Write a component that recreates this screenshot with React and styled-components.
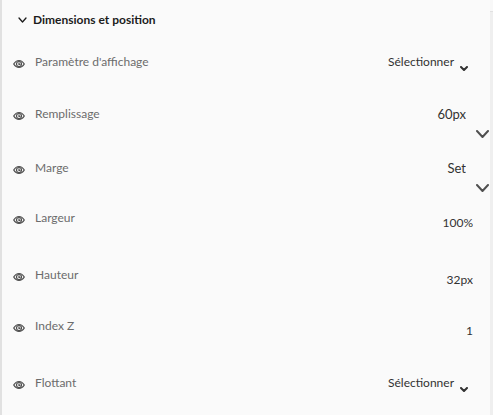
import React, { useState } from "react";
import styled, { createGlobalStyle } from "styled-components";

const GlobalStyle = createGlobalStyle`
  * { box-sizing: border-box; }
  body {
    margin: 0;
    background: #fafafa;
    font-family: Lato, "Noto Sans", sans-serif;
    font-size: 12px;
    line-height: 20px;
    color: #323232;
  }
  button, input, select { font: inherit; color: inherit; }
`;

const Page = styled.div`
  display: flex;
  min-height: 100vh;
  border-left: 2px solid #e1e1e1;
`;

const Panel = styled.section`
  flex: 1;
  min-width: 0;
  padding-top: 10px;
`;

const Gutter = styled.div`
  width: 3px;
  background: #efefef;
`;

const GutterCap = styled.div`
  height: 12px;
  background: #f8f8f8;
  border-bottom: 1px solid #e1e1e1;
`;

const Heading = styled.h2`
  margin: 0 0 22px;
  font-size: 12px;
  line-height: 20px;
`;

const HeadingButton = styled.button`
  display: flex;
  align-items: center;
  gap: 6px;
  padding: 0 0 0 16px;
  border: 0;
  background: none;
  color: #1c1c1c;
  font-weight: 700;
`;

const Row = styled.div`
  display: flex;
  align-items: flex-start;
  height: ${(p) => p.$height}px;
`;

const EyeButton = styled.button`
  display: flex;
  width: 33px;
  padding: 6px 0 0 11px;
  border: 0;
  background: none;
  color: #505050;
`;

const Label = styled.label`
  flex: 1;
  white-space: nowrap;
  color: #6c6c6c;
`;

const Field = styled.div`
  display: flex;
  flex-direction: column;
  align-items: flex-end;
`;

const TextInput = styled.input`
  width: 100px;
  height: 20px;
  margin-top: ${(p) => (p.$compound ? 0 : 5)}px;
  padding: 0 ${(p) => (p.$compound ? 24 : 17)}px 0 0;
  border: 0;
  outline: 0;
  background: none;
  font-size: ${(p) => (p.$compound ? 13 : 12)}px;
  text-align: right;
`;

const SelectBox = styled.div`
  display: flex;
  gap: 5px;
  padding-right: 22px;
`;

const Select = styled.select`
  appearance: none;
  height: 20px;
  padding: 0;
  border: 0;
  outline: 0;
  background: none;
`;

const SelectArrow = styled.span`
  display: flex;
  padding-top: 14px;
  pointer-events: none;
`;

const ExpandButton = styled.button`
  display: flex;
  align-items: center;
  justify-content: center;
  width: 16px;
  height: 20px;
  padding: 0;
  border: 0;
  background: none;
  color: #505050;
`;

function Chevron({ width, height, stroke }) {
  return (
    <svg width={width} height={height} viewBox={`0 0 ${width} ${height}`} fill="none" stroke="currentColor" strokeWidth={stroke} strokeLinecap="round" strokeLinejoin="round" aria-hidden="true">
      <path d={`M1 1 L${width / 2} ${height - 1} L${width - 1} 1`} />
    </svg>
  );
}

function Eye() {
  return (
    <svg width="12" height="12" viewBox="0 0 12 12" fill="none" stroke="currentColor" strokeWidth="1.2" aria-hidden="true">
      <path d="M.7 6C2.2 3.500 4 2.500 6 2.500S9.800 3.500 11.300 6C9.800 8.500 8 9.500 6 9.500S2.200 8.500 .7 6Z" />
      <circle cx="6" cy="6" r="2.500" />
      <path d="M6 4.500V6.300H7.500" />
    </svg>
  );
}

const PROPERTIES = [
  { id: "display", label: "Paramètre d'affichage", kind: "select", height: 52 },
  { id: "padding", label: "Remplissage", kind: "compound", value: "60px", height: 54 },
  { id: "margin", label: "Marge", kind: "compound", value: "Set", height: 50 },
  { id: "width", label: "Largeur", kind: "text", value: "100%", height: 57 },
  { id: "height", label: "Hauteur", kind: "text", value: "32px", height: 51 },
  { id: "zindex", label: "Index Z", kind: "text", value: "1", height: 57 },
  { id: "float", label: "Flottant", kind: "select", height: 40 },
];

function Property({ id, label, kind, value, height }) {
  return (
    <Row $height={height}>
      <EyeButton type="button" aria-label={`Visibilité : ${label}`}>
        <Eye />
      </EyeButton>
      <Label htmlFor={id}>{label}</Label>
      {kind === "select" ? (
        <SelectBox>
          <Select id={id}>
            <option>Sélectionner</option>
          </Select>
          <SelectArrow>
            <Chevron width={8} height={5} stroke={2} />
          </SelectArrow>
        </SelectBox>
      ) : (
        <Field>
          <TextInput id={id} defaultValue={value} $compound={kind === "compound"} />
          {kind === "compound" && (
            <ExpandButton type="button" aria-label={`Développer ${label}`}>
              <Chevron width={13} height={8} stroke={2} />
            </ExpandButton>
          )}
        </Field>
      )}
    </Row>
  );
}

export default function App() {
  const [open, setOpen] = useState(true);
  return (
    <>
      <GlobalStyle />
      <Page>
        <Panel>
          <Heading>
            <HeadingButton type="button" aria-expanded={open} onClick={() => setOpen(!open)}>
              <Chevron width={9} height={6} stroke={1.3} />
              Dimensions et position
            </HeadingButton>
          </Heading>
          {open && PROPERTIES.map((p) => <Property key={p.id} {...p} />)}
        </Panel>
        <Gutter>
          <GutterCap />
        </Gutter>
      </Page>
    </>
  );
}
